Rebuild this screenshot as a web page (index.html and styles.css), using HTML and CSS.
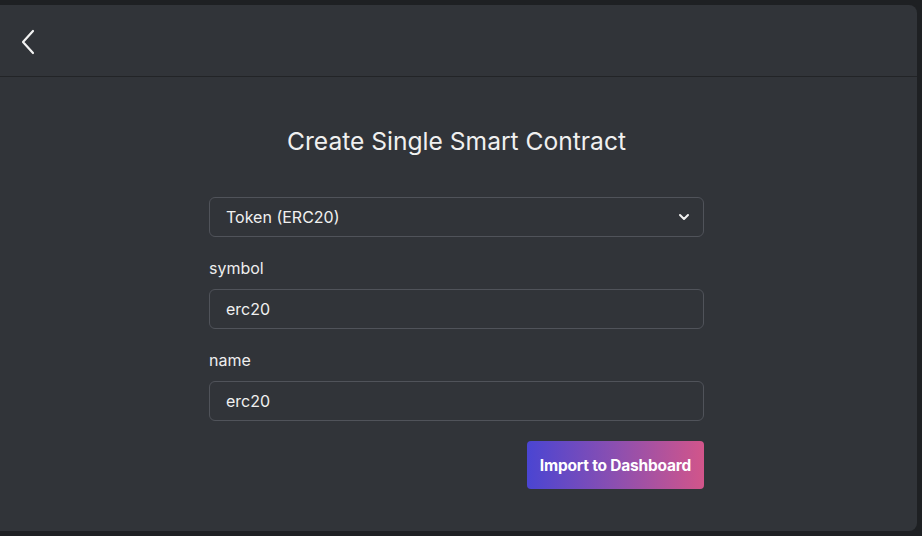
FILE: index.html
```html
<!DOCTYPE html>
<html lang="en">
<head>
  <meta charset="UTF-8" />
  <meta name="viewport" content="width=device-width, initial-scale=1.0"/>
  <title>Create Single Smart Contract</title>
  <link rel="stylesheet" href="styles.css">
</head>
<body>
  <div class="window">
    <header class="topbar">
      <button class="back" aria-label="Back">
        <svg width="16" height="26" viewBox="0 0 16 26" fill="none" stroke="#f2f2f2" stroke-width="2.2" stroke-linecap="round" stroke-linejoin="round">
          <path d="M13 2 L3 13 L13 24"/>
        </svg>
      </button>
    </header>

    <main class="content">
      <h1>Create Single Smart Contract</h1>

      <form class="form" onsubmit="return false">
        <div class="select-wrap">
          <select id="contractType">
            <option value="erc20">Token (ERC20)</option>
            <option value="erc721">NFT (ERC721)</option>
          </select>
          <svg class="caret" width="12" height="8" viewBox="0 0 12 8" fill="none" stroke="#f2f2f2" stroke-width="2" stroke-linecap="round" stroke-linejoin="round">
            <path d="M2 2 L6 6 L10 2"/>
          </svg>
        </div>

        <label for="symbol">symbol</label>
        <input type="text" id="symbol" value="erc20">

        <label for="name">name</label>
        <input type="text" id="name" value="erc20">

        <div class="actions">
          <button class="primary">Import to Dashboard</button>
        </div>
      </form>
    </main>
  </div>
</body>
</html>
```

FILE: styles.css
```css
body {
  font-family: 'Inter', 'Noto Sans', sans-serif;
  background: #1e2023;
  margin: 0;
  padding: 5px 5px 5px 0;
  color: #eeeeee;
}
.window {
  height: 526px;
  background: #313439;
  border-radius: 0 8px 8px 0;
  overflow: hidden;
}
.topbar {
  height: 71px;
  border-bottom: 1px solid #222427;
  display: flex;
  align-items: center;
  padding-left: 20px;
}
.back {
  background: none;
  border: none;
  padding: 0;
  margin-top: 2px;
  cursor: pointer;
  display: flex;
}
.content {
  padding: 49px 4px 0 0;
}
h1 {
  text-align: center;
  font-weight: 400;
  font-size: 24.6px;
  line-height: 30px;
  margin: 0 0 41px;
  color: #f0f0f0;
}
.form {
  width: 495px;
  margin: 0 auto;
  display: flex;
  flex-direction: column;
}
.select-wrap {
  position: relative;
}
select, input {
  width: 100%;
  box-sizing: border-box;
  height: 40px;
  padding: 0 16px;
  font-family: inherit;
  font-size: 16px;
  color: #f0f0f0;
  background: #313439;
  border: 1px solid #50535a;
  border-radius: 6px;
  outline: none;
}
select {
  appearance: none;
  -webkit-appearance: none;
}
.caret {
  position: absolute;
  right: 14px;
  top: 16px;
  pointer-events: none;
}
label {
  font-size: 16px;
  line-height: 20px;
  margin: 21px 0 11px;
  color: #eeeeee;
}
.actions {
  display: flex;
  justify-content: flex-end;
  margin-top: 20px;
}
.primary {
  width: 177px;
  height: 48px;
  border: none;
  border-radius: 4px;
  background: linear-gradient(90deg, #4a45d2 0%, #8c4fb0 50%, #d2558a 100%);
  color: #ffffff;
  font-family: inherit;
  font-weight: 700;
  font-size: 15.5px;
  letter-spacing: -0.2px;
  cursor: pointer;
}
```
